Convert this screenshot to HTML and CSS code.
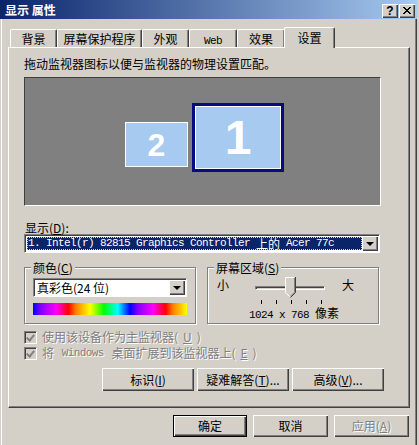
FILE: index.html
```html
<!DOCTYPE html>
<html lang="zh-CN">
<head>
  <meta charset="UTF-8" />
  <title>显示 属性</title>
  <link rel="stylesheet" href="styles.css">
</head>
<body>

  <div class="window">
    <div class="titlebar">
      <span class="title">显示 属性</span>
      <div class="caption-btns">
        <div class="cap-btn help">?</div>
        <div class="cap-btn close">
          <svg width="8" height="7" viewBox="0 0 8 7"><path d="M0 0h2v1h1v1h2v-1h1v-1h2v1h-1v1h-1v1h-1v1h1v1h1v1h1v1h-2v-1h-1v-1h-2v1h-1v1h-2v-1h1v-1h1v-1h1v-1h-1v-1h-1v-1h-1z" fill="#000"/></svg>
        </div>
      </div>
    </div>

    <div class="tabs">
      <div class="tab w47">背景</div>
      <div class="tab w85">屏幕保护程序</div>
      <div class="tab w47">外观</div>
      <div class="tab w48"><span class="en">Web</span></div>
      <div class="tab w48">效果</div>
      <div class="tab active">设置</div>
    </div>

    <div class="panel">
      <p class="hint">拖动监视器图标以便与监视器的物理设置匹配。</p>

      <div class="monitors">
        <div class="mon mon2">2</div>
        <div class="mon mon1">1</div>
      </div>

      <div class="field-label">显示(<u>D</u>):</div>
      <div class="combo wide">
        <div class="combo-text selected"><span class="en">1. Intel(r) 82815 Graphics Controller </span>上的<span class="en"> Acer 77c</span></div>
        <div class="combo-arrow"><span class="tri"></span></div>
      </div>

      <div class="groups">
        <div class="group">
          <span class="legend">颜色(<u>C</u>)</span>
          <div class="combo small">
            <div class="combo-text">真彩色(24 位)</div>
            <div class="combo-arrow"><span class="tri"></span></div>
          </div>
          <div class="spectrum"></div>
        </div>
        <div class="group">
          <span class="legend">屏幕区域(<u>S</u>)</span>
          <div class="slider-row">
            <span>小</span>
            <div class="slider">
              <div class="track"></div>
              <svg class="thumb" width="11" height="21" viewBox="0 0 11 21">
                <path d="M0.5 0.5h10v15l-5 5l-5-5z" fill="#d4d0c8"/>
                <path d="M0.5 15.5v-15h9" fill="none" stroke="#fff"/>
                <path d="M10.5 0v15.5l-5 5" fill="none" stroke="#404040"/>
                <path d="M9.5 1v14.2l-4 4" fill="none" stroke="#808080"/>
                <path d="M0.5 15.5l4 4" fill="none" stroke="#fff"/>
              </svg>
            </div>
            <span>大</span>
          </div>
          <div class="ticks">
            <i></i><i></i><i></i><i></i><i></i>
          </div>
          <div class="res"><span class="en">1024 x 768 </span>像素</div>
        </div>
      </div>

      <div class="checks">
        <div class="check"><span class="box"></span>使用该设备作为主监视器(<u>U</u>)</div>
        <div class="check"><span class="box"></span>将 <span class="en">Windows</span> 桌面扩展到该监视器上(<u>E</u>)</div>
      </div>

      <div class="panel-btns">
        <div class="btn">标识(<u>I</u>)</div>
        <div class="btn">疑难解答(<u>T</u>)...</div>
        <div class="btn">高级(<u>V</u>)...</div>
      </div>
    </div>

    <div class="dialog-btns">
      <div class="btn default">确定</div>
      <div class="btn">取消</div>
      <div class="btn disabled">应用(<u>A</u>)</div>
    </div>
  </div>

</body>
</html>
```

FILE: styles.css
```css
* {
  box-sizing: border-box;
  margin: 0;
  padding: 0;
}

body {
  background: #d4d0c8;
  font-family: "Noto Sans CJK SC", "Liberation Sans", sans-serif;
  font-size: 12px;
  line-height: 14px;
  color: #000;
  width: 419px;
  height: 445px;
  overflow: hidden;
}

.en {
  font-family: "Liberation Mono", monospace;
  font-size: 11px;
  letter-spacing: -0.6px;
}

u {
  text-decoration: underline;
}

.window {
  width: 417px;
  height: 445px;
  background: #d4d0c8;
  box-shadow: inset 1px 0 #d4d0c8, inset 2px 0 #fff, inset -1px 0 #404040, inset -2px 0 #808080;
}

/* title bar */
.titlebar {
  height: 19px;
  display: flex;
  align-items: center;
  justify-content: space-between;
  padding: 0 2px 0 5px;
  background: linear-gradient(to right, #0a246a, #a6caf0);
}

.title {
  color: #fff;
  font-weight: bold;
  font-size: 12px;
}

.caption-btns {
  display: flex;
  gap: 1px;
  margin-top: 2px;
}

.cap-btn {
  width: 16px;
  height: 14px;
  background: #d4d0c8;
  box-shadow: inset 1px 1px #fff, inset -1px -1px #404040, inset -2px -2px #808080;
  display: flex;
  align-items: center;
  justify-content: center;
  font-family: "Liberation Sans", sans-serif;
  font-weight: bold;
  font-size: 12px;
  line-height: 12px;
}

/* tabs */
.tabs {
  display: flex;
  align-items: flex-end;
  height: 28px;
  padding-left: 10px;
  position: relative;
  z-index: 1;
}

.tab {
  height: 18px;
  text-align: center;
  padding-top: 2px;
  border-top: 1px solid #fff;
  border-left: 1px solid #fff;
  border-right: 1px solid #404040;
  border-radius: 2px 2px 0 0;
  box-shadow: inset -1px 0 #808080;
  background: #d4d0c8;
}

.w47 { width: 47px; }
.w48 { width: 48px; }
.w85 { width: 85px; }

.tab.active {
  width: 51px;
  height: 21px;
  margin-left: -1px;
  margin-bottom: -1px;
  padding-top: 3px;
}

/* main panel */
.panel {
  margin-left: 8px;
  width: 402px;
  height: 361px;
  border-top: 1px solid #fff;
  border-left: 1px solid #fff;
  border-right: 1px solid #404040;
  border-bottom: 1px solid #404040;
  box-shadow: inset -1px -1px #808080;
  padding: 9px 0 0 15px;
}

.hint {
  height: 14px;
}

.monitors {
  position: relative;
  margin-top: 6px;
  width: 357px;
  height: 129px;
  background: #808080;
  border-top: 1px solid #404040;
  border-left: 1px solid #404040;
  border-right: 1px solid #fff;
  border-bottom: 1px solid #fff;
}

.mon {
  position: absolute;
  background: #a6caf0;
  color: #fff;
  font-family: "Liberation Sans", sans-serif;
  font-weight: bold;
  display: flex;
  align-items: center;
  justify-content: center;
}

.mon2 {
  left: 100px;
  top: 44px;
  width: 63px;
  height: 45px;
  border: 1px solid #fff;
  font-size: 32px;
}

.mon1 {
  left: 167px;
  top: 25px;
  width: 92px;
  height: 69px;
  border: 3px solid #0a0a80;
  box-shadow: inset 0 0 0 1px #fff;
  font-size: 48px;
}

.field-label {
  margin-top: 15px;
  height: 13px;
  line-height: 13px;
  padding-left: 1px;
}

/* combo boxes */
.combo {
  display: flex;
  height: 19px;
  background: #fff;
  border-top: 1px solid #808080;
  border-left: 1px solid #808080;
  border-right: 1px solid #fff;
  border-bottom: 1px solid #fff;
  box-shadow: inset 1px 1px #404040;
  padding: 2px;
}

.combo.wide {
  width: 356px;
}

.combo.small {
  width: 154px;
}

.combo-text {
  flex: 1;
  display: flex;
  align-items: center;
  padding-left: 1px;
  line-height: 13px;
  white-space: pre;
}

.combo-text .en {
  line-height: 13px;
}

.combo-text.selected {
  background: #0a246a;
  color: #fff;
  outline: 1px dotted #d4d0c8;
  outline-offset: -1px;
}

.combo-arrow {
  width: 16px;
  margin: -1px -1px -1px 0;
  background: #d4d0c8;
  box-shadow: inset 1px 1px #fff, inset -1px -1px #404040, inset -2px -2px #808080;
  display: flex;
  align-items: center;
  justify-content: center;
}

.tri {
  width: 0;
  height: 0;
  border-left: 4px solid transparent;
  border-right: 4px solid transparent;
  border-top: 4px solid #000;
}

/* groups */
.groups {
  display: flex;
  gap: 11px;
  margin-top: 14px;
}

.group {
  position: relative;
  width: 172px;
  height: 57px;
  border: 1px solid #808080;
  box-shadow: inset 1px 1px #fff, 1px 1px #fff;
  padding: 10px 0 0 8px;
}

.legend {
  position: absolute;
  top: -7px;
  left: 6px;
  padding: 0 2px;
  background: #d4d0c8;
  line-height: 13px;
}

.spectrum {
  margin-top: 6px;
  width: 154px;
  height: 12px;
  background: linear-gradient(to right,
    #0000ff 0%, #8000ff 5%, #ff00ff 15%, #ff0000 23%, #ff8000 28%, #ffff00 37%,
    #00ff00 46%, #00ffff 55%, #0000ff 63%, #8000ff 68%, #ff00ff 78%,
    #ff0000 86%, #ff8000 91%, #ffff00 100%);
}

.slider-row {
  display: flex;
  align-items: flex-start;
  height: 21px;
  padding-left: 1px;
}

.slider {
  position: relative;
  width: 70px;
  height: 21px;
  margin: 0 17px 0 26px;
}

.track {
  position: absolute;
  left: 0;
  right: 0;
  top: 8px;
  height: 4px;
  border-top: 1px solid #808080;
  border-left: 1px solid #808080;
  border-bottom: 1px solid #fff;
  border-right: 1px solid #fff;
  box-shadow: inset 1px 1px #404040;
}

.thumb {
  position: absolute;
  left: 30px;
  top: -1px;
}

.ticks {
  display: flex;
  gap: 14px;
  padding-left: 45px;
  height: 6px;
  margin-top: 1px;
}

.ticks i {
  width: 1px;
  height: 4px;
  background: #000;
}

.res {
  text-align: center;
  padding-right: 6px;
  line-height: 12px;
  margin-top: 1px;
}

/* checkboxes */
.checks {
  margin-top: 5px;
  color: #808080;
  text-shadow: 1px 1px #fff;
}

.check {
  display: flex;
  align-items: center;
  height: 16px;
  gap: 5px;
  white-space: pre;
}

.check .box {
  width: 13px;
  height: 13px;
  background: #d4d0c8;
  border-top: 1px solid #808080;
  border-left: 1px solid #808080;
  border-right: 1px solid #fff;
  border-bottom: 1px solid #fff;
  box-shadow: inset 1px 1px #404040, inset -1px -1px #d4d0c8;
  position: relative;
  flex: none;
}

.check .box::after {
  content: "";
  position: absolute;
  left: 3px;
  top: 1px;
  width: 3px;
  height: 6px;
  border-right: 2px solid #808080;
  border-bottom: 2px solid #808080;
  transform: rotate(40deg);
}

/* buttons */
.btn {
  height: 23px;
  display: flex;
  align-items: center;
  justify-content: center;
  background: #d4d0c8;
  box-shadow: inset 1px 1px #fff, inset -1px -1px #404040, inset -2px -2px #808080;
}

.panel-btns {
  display: flex;
  gap: 3px;
  margin-top: 7px;
  padding-left: 78px;
}

.panel-btns .btn {
  width: 92px;
}

.dialog-btns {
  display: flex;
  gap: 6px;
  margin-top: 7px;
  padding-left: 173px;
}

.dialog-btns .btn {
  width: 75px;
  height: 22px;
}

.btn.default {
  border: 1px solid #000;
  width: 74px;
}

.btn.disabled {
  color: #808080;
  text-shadow: 1px 1px #fff;
}
```
